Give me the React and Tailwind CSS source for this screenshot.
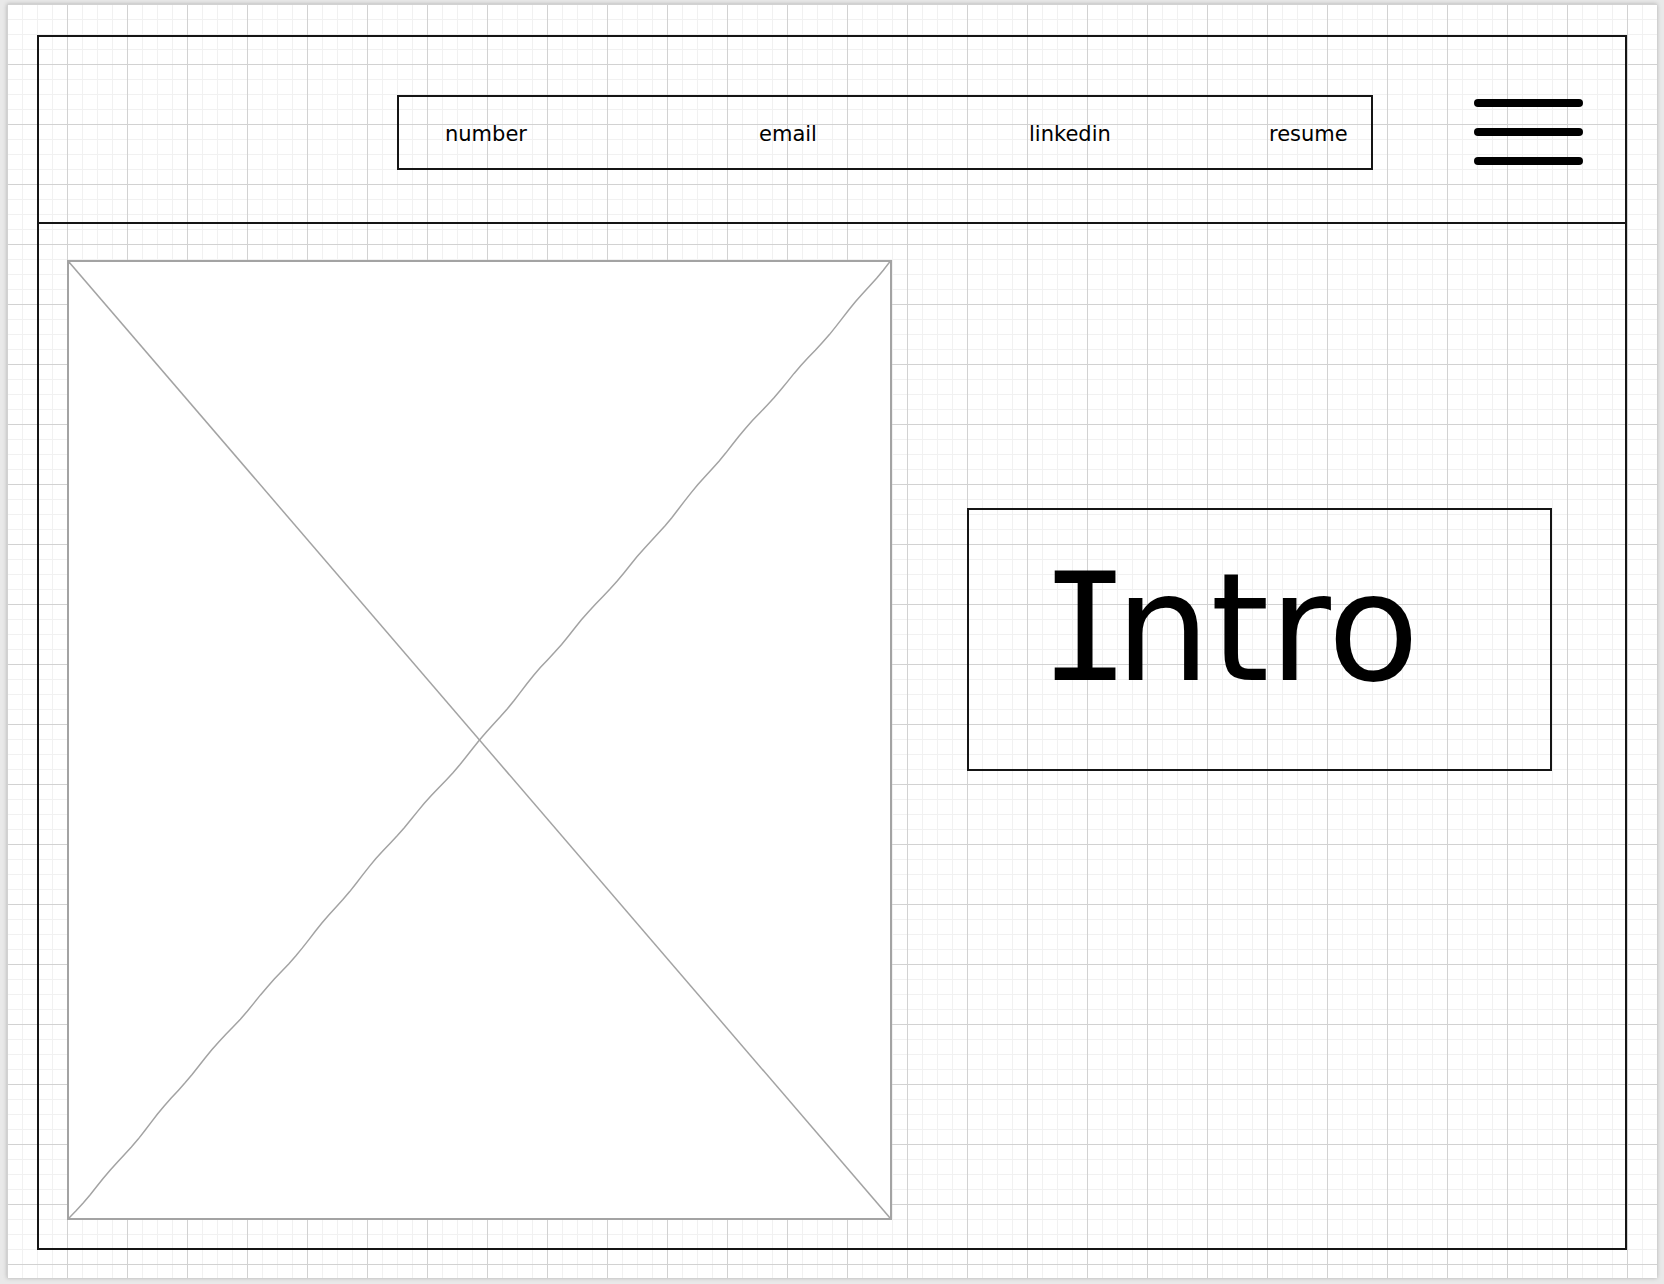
import React from 'react';

const gridBg =
  'bg-white [background-image:linear-gradient(to_right,#d2d2d2_1px,transparent_1px),linear-gradient(to_bottom,#d2d2d2_1px,transparent_1px),linear-gradient(to_right,#f1f1f1_1px,transparent_1px),linear-gradient(to_bottom,#f1f1f1_1px,transparent_1px)] [background-size:60px_60px,60px_60px,15px_15px,15px_15px]';

// slightly wobbly second diagonal, like a hand drawn stroke
const wobble = (() => {
  const pts = [];
  const n = 120;
  for (let i = 0; i <= n; i++) {
    const t = i / n;
    const off = Math.sin(t * 97) * 0.45 + Math.sin(t * 29) * 0.5;
    pts.push(`${(t * 821 + off).toFixed(1)},${(956 - t * 956 + off).toFixed(1)}`);
  }
  return pts.join(' ');
})();

const NavItem = ({ label, width }) => (
  <div className={`${width} mt-[4px] text-[21px] leading-none text-black`}>{label}</div>
);

export default function App() {
  return (
    <div className="w-[1664px] h-[1284px] bg-[#e9e9e9] pt-[4px] pl-[7px] font-['DejaVu_Sans',sans-serif]">
      <div className={`w-[1650px] h-[1274px] shadow-[0_0_4px_rgba(0,0,0,0.25)] pt-[31px] pl-[30px] ${gridBg}`}>
        <div className="w-[1590px] h-[1215px] border-2 border-[#151515] flex flex-col">
          {/* header */}
          <div className="h-[187px] border-b-2 border-[#151515] flex items-start pl-[358px] pt-[58px] shrink-0">
            <div className="w-[976px] h-[75px] border-2 border-[#151515] flex items-center pl-[46px]">
              <NavItem label="number" width="w-[314px]" />
              <NavItem label="email" width="w-[270px]" />
              <NavItem label="linkedin" width="w-[240px]" />
              <NavItem label="resume" width="" />
            </div>
            <div className="ml-[101px] mt-[4px] flex flex-col gap-[21px]">
              <div className="w-[109px] h-[8px] rounded-full bg-black" />
              <div className="w-[109px] h-[8px] rounded-full bg-black" />
              <div className="w-[109px] h-[8px] rounded-full bg-black" />
            </div>
          </div>

          {/* body */}
          <div className="flex items-start pl-[28px] pt-[36px]">
            <div className="relative w-[825px] h-[960px] bg-white border-2 border-[#a3a3a3] shrink-0">
              <svg className="absolute inset-0 w-full h-full" viewBox="0 0 821 956" preserveAspectRatio="none">
                <line x1="0" y1="0" x2="821" y2="956" stroke="#a3a3a3" strokeWidth="1.5" />
                <polyline points={wobble} fill="none" stroke="#a3a3a3" strokeWidth="1.5" />
              </svg>
            </div>

            <div className="ml-[75px] mt-[248px] w-[585px] h-[263px] border-2 border-[#151515] pl-[71px] pt-[43px]">
              <div className="text-[150px] leading-none text-black whitespace-nowrap">
                <span className="font-['DejaVu_Sans_Mono',monospace] tracking-[-15px]">I</span>ntro
              </div>
            </div>
          </div>
        </div>
      </div>
    </div>
  );
}
